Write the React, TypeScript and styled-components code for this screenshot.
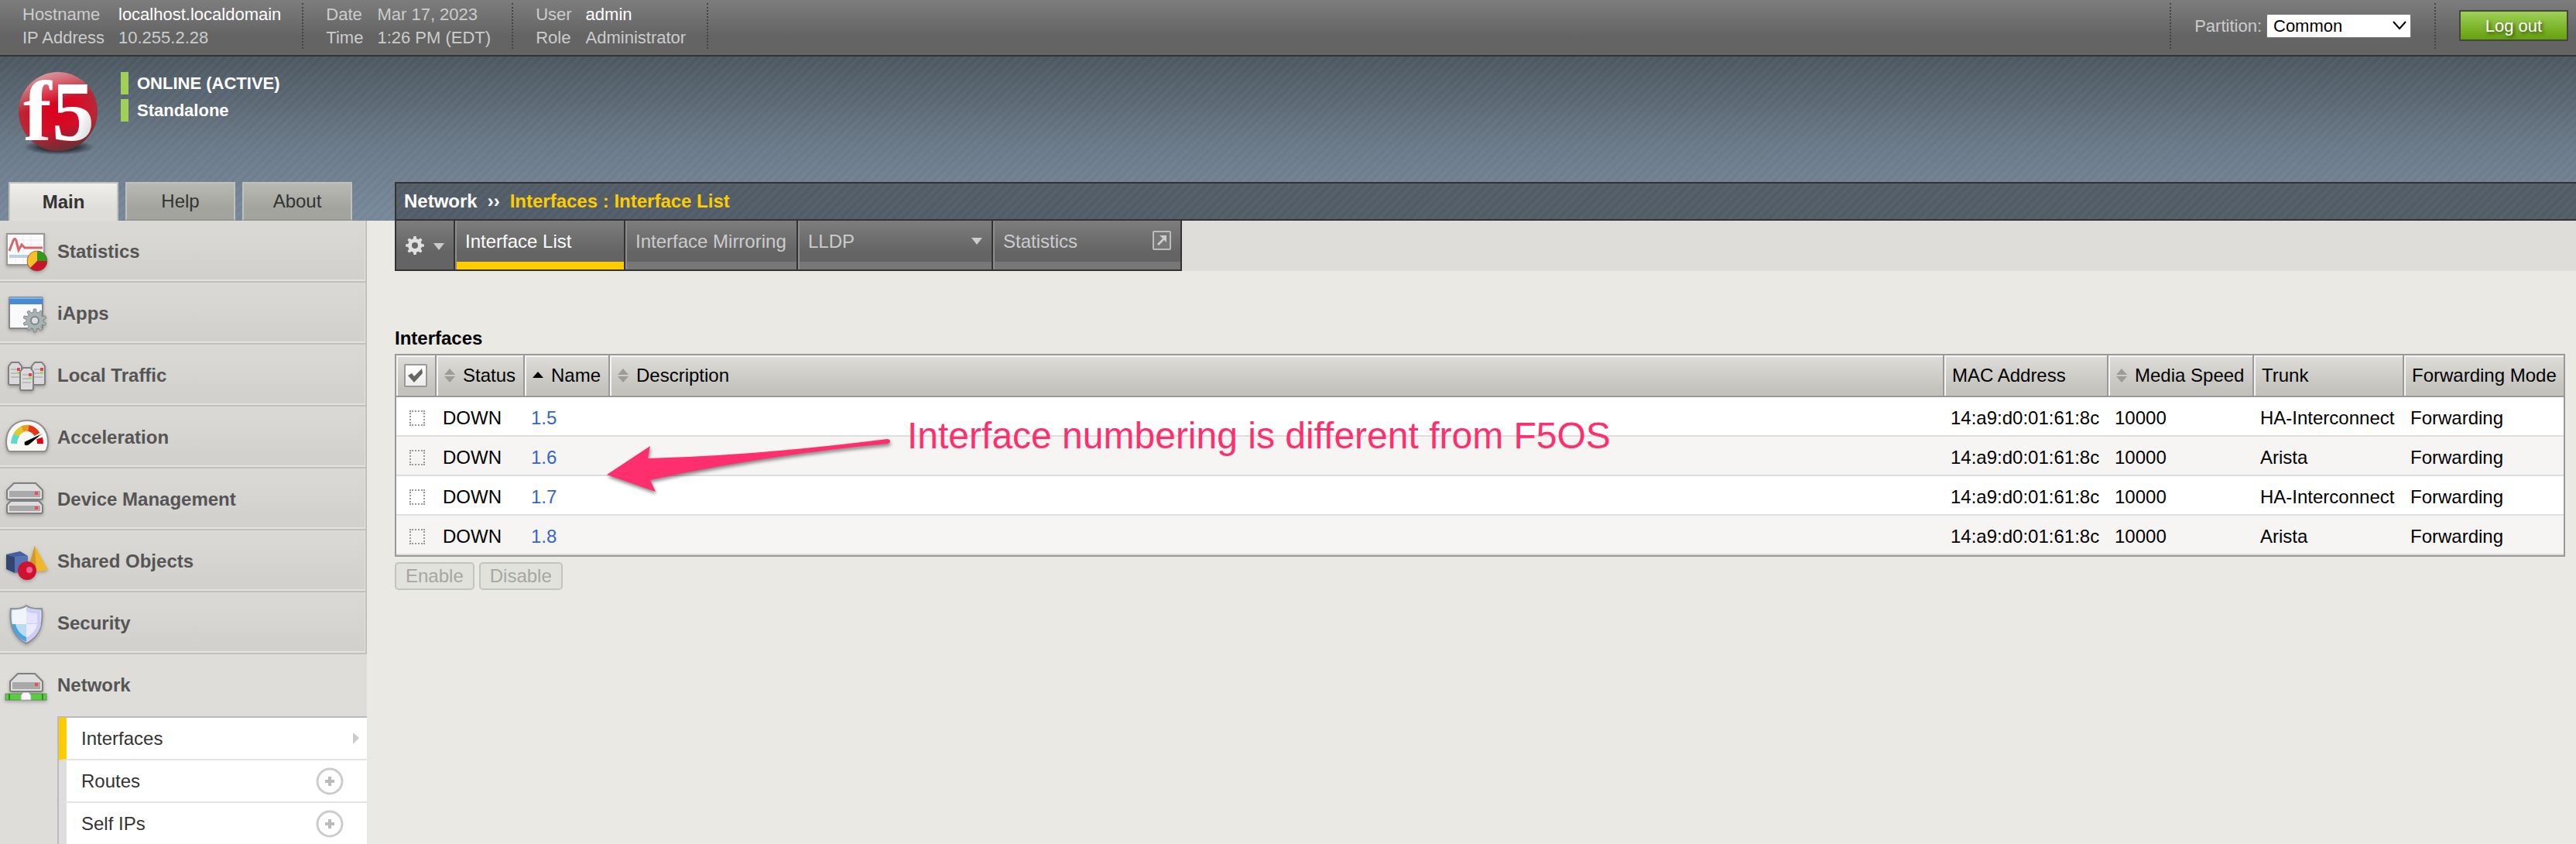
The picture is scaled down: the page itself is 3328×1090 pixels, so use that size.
import React from "react";
import styled, { createGlobalStyle, css } from "styled-components";

const GlobalStyle = createGlobalStyle`
  *, *::before, *::after { box-sizing: border-box; }
  body {
    margin: 0;
    background: #eae9e4;
    color: #000;
    font-family: "Liberation Sans", Arial, Helvetica, sans-serif;
    font-size: 24px;
    line-height: 30px;
  }
  a { color: inherit; text-decoration: none; }
  button, select, input { font: inherit; margin: 0; }
`;

const stripes =
  "repeating-linear-gradient(135deg, rgba(255,255,255,0.025) 0 4px, rgba(0,0,0,0.01) 4px 8px)";
const greyBar = "linear-gradient(#7d7d7d, #646464 65%)";

const Page = styled.div`
  display: flex;
  flex-direction: column;
  min-height: 100vh;
`;

/* ---- top bar ---- */

const TopBar = styled.header`
  display: flex;
  align-items: flex-start;
  height: 73px;
  padding: 4px 10px 0 0;
  background: ${greyBar};
  border-bottom: 2px solid #333;
  color: #ccc;
  font-size: 22px;
  line-height: 29px;
`;

const InfoBlock = styled.dl`
  display: grid;
  grid-template-columns: auto auto;
  column-gap: 18px;
  height: 59px;
  margin: 0;
  padding: 0 27px 0 29px;
  border-right: 2px dotted #444;
`;

const Term = styled.dt``;

const Value = styled.dd<{ $strong?: boolean }>`
  margin: 0;
  color: ${(p) => (p.$strong ? "#fff" : "inherit")};
`;

const Session = styled.div`
  display: flex;
  margin-left: auto;
`;

const PartitionBox = styled.div`
  display: flex;
  align-items: center;
  gap: 6px;
  height: 59px;
  padding: 0 30px;
  border: 2px dotted #444;
  border-width: 0 2px;
`;

const SelectWrap = styled.div`
  position: relative;
  display: flex;
`;

const PartitionSelect = styled.select`
  appearance: none;
  width: 187px;
  height: 31px;
  padding: 0 8px;
  background: #fff;
  border: 1px solid #777;
  border-radius: 2px;
  color: #000;
  line-height: 28px;
`;

const SelectChevron = styled.svg`
  position: absolute;
  right: 6px;
  top: 9px;
  pointer-events: none;
`;

const LogoutArea = styled.div`
  padding: 9px 0 0 30px;
`;

const LogoutButton = styled.button`
  display: block;
  width: 141px;
  height: 40px;
  padding: 0;
  background: linear-gradient(#9fd057, #64a00c);
  border: 2px solid #444;
  color: #fff;
  text-shadow: 2px 2px 4px rgba(0, 0, 0, 0.6);
`;

/* ---- banner ---- */

const Banner = styled.div`
  display: grid;
  grid-template-columns: 510px 1fr;
  align-items: end;
  height: 212px;
  background: ${stripes}, linear-gradient(#4d5861, #6b7a89 55%, #778899 95%);
`;

const BannerSide = styled.div`
  display: flex;
  flex-direction: column;
  justify-content: space-between;
  height: 212px;
  padding: 4px 0 0 11px;
`;

const Identity = styled.div`
  display: flex;
  gap: 28px;
  padding-left: 11px;
`;

const StatusList = styled.ul`
  display: flex;
  flex-direction: column;
  gap: 6px;
  margin: 16px 0 0;
  padding: 0;
  list-style: none;
`;

const StatusItem = styled.li`
  padding-left: 11px;
  border-left: 10px solid #a0d057;
  color: #fff;
  font-size: 22px;
  font-weight: bold;
  line-height: 29px;
`;

const Tabs = styled.nav`
  display: flex;
  gap: 9px;
`;

const Tab = styled.button<{ $active?: boolean }>`
  width: 142px;
  height: 50px;
  padding: 0;
  border: 2px solid #c0c0bf;
  color: #333;
  ${(p) =>
    p.$active
      ? css`
          background: linear-gradient(#f0efec, #deddd9 70%);
          border-bottom: 0;
          font-weight: bold;
        `
      : css`
          background: linear-gradient(#b9b9b4, #a4a49e 70%);
          border-bottom-color: #969692;
        `}
`;

const Breadcrumb = styled.h1`
  display: flex;
  align-items: center;
  gap: 13px;
  height: 50px;
  margin: 0;
  padding-left: 10px;
  background: ${stripes}, #525d68;
  border: 2px solid #333;
  border-right: 0;
  color: #fff;
  font-size: 24px;
  font-weight: bold;
`;

const Crumb = styled.span`
  color: #fc0;
`;

/* ---- sidebar ---- */

const Body = styled.div`
  display: grid;
  grid-template-columns: 474px 1fr;
  flex: 1;
`;

const Sidebar = styled.nav`
  background: #deddd9;
`;

const SideItem = styled.a<{ $open?: boolean }>`
  display: flex;
  align-items: center;
  height: 80px;
  padding-top: ${(p) => (p.$open ? 0 : 2)}px;
  color: #555;
  font-weight: bold;
  ${(p) =>
    !p.$open &&
    css`
      background: linear-gradient(#dad9d5, #d1d0cc);
      border-right: 2px solid #c0c0bf;
      border-bottom: 2px solid #c0c0bf;
      box-shadow: inset -1px -2px 0 #e3e2df;
    `}
`;

const SideIcon = styled.svg`
  flex: none;
  width: 74px;
  height: 76px;
  filter: drop-shadow(0 2px 2px rgba(0, 0, 0, 0.25));
`;

const SubMenu = styled.ul`
  margin: 0 0 0 74px;
  padding: 0;
  list-style: none;
  border: 2px solid #bbb;
  border-width: 2px 0 0 2px;
`;

const SubItem = styled.li<{ $active?: boolean }>`
  display: flex;
  align-items: center;
  justify-content: space-between;
  height: 55px;
  padding: 0 ${(p) => (p.$active ? 10 : 30)}px 0 19px;
  background: #fff;
  border-left: 10px solid ${(p) => (p.$active ? "#fc0" : "#ddd")};
  border-bottom: 2px solid #e4e4e4;
  color: #333;
  &:last-child {
    height: 53px;
    border-bottom: 0;
  }
`;

const AddButton = styled.button`
  display: flex;
  padding: 0;
  background: none;
  border: 0;
`;

/* ---- main ---- */

const Main = styled.main`
  min-width: 0;
  padding-left: 36px;
`;

const MenuStrip = styled.nav`
  display: flex;
  height: 65px;
  background: #deddd9;
`;

const menuCell = css`
  height: 65px;
  border-right: 2px solid #333;
  border-bottom: 2px solid #333;
  background: ${greyBar};
`;

const GearButton = styled.button`
  ${menuCell}
  display: flex;
  align-items: center;
  gap: 12px;
  width: 78px;
  padding: 0 0 0 12px;
  border-left: 2px solid #333;
  border-top: 0;
`;

const MenuLink = styled.a<{ $active?: boolean; $width: number }>`
  ${menuCell}
  display: flex;
  align-items: flex-start;
  justify-content: space-between;
  min-width: ${(p) => p.$width}px;
  padding: 12px 12px 0 13px;
  color: ${(p) => (p.$active ? "#fff" : "#ccc")};
  box-shadow: inset 2px 0 0 #8d8d8d, inset 0 -10px 0 ${(p) => (p.$active ? "#fc0" : "#777")};
`;

const Heading = styled.h2`
  margin: 72px 0 5px;
  font-size: 24px;
  line-height: 30px;
`;

const TableArea = styled.div`
  position: relative;
  margin-right: 14px;
`;

const Table = styled.table`
  width: 100%;
  table-layout: fixed;
  border: 2px solid #999;
  border-collapse: separate;
  border-spacing: 0;
`;

const Th = styled.th`
  height: 54px;
  padding: 0 0 0 10px;
  background: linear-gradient(#deddd9, #c3c2bd 85%);
  border-right: 2px solid #999;
  border-bottom: 2px solid #999;
  box-shadow: inset 2px 2px 0 #f4f4f2;
  font-weight: normal;
  text-align: left;
  white-space: nowrap;
  &:last-child { border-right: 0; }
`;

const HeadLabel = styled.span`
  display: flex;
  align-items: center;
  gap: 10px;
`;

const Row = styled.tr`
  background: #fff;
  &:nth-child(even) { background: #f6f5f3; }
`;

const Td = styled.td`
  height: 51px;
  padding: 4px 0 0 8px;
  border-bottom: 2px solid #ddd;
  white-space: nowrap;
`;

const InterfaceLink = styled.a`
  color: #36c;
`;

const CheckHolder = styled.span`
  position: relative;
  display: flex;
`;

const HeadCheck = styled.input`
  appearance: none;
  width: 30px;
  height: 30px;
  background: linear-gradient(#fff, #ececea);
  border: 2px solid #999;
  border-radius: 2px;
`;

const HeadTick = styled.svg`
  position: absolute;
  left: 5px;
  top: 5px;
  pointer-events: none;
`;

const RowCheck = styled.input`
  appearance: none;
  display: block;
  width: 20px;
  height: 20px;
  margin-left: 9px;
  border: 2px dotted #999;
`;

const Note = styled.div`
  position: absolute;
  left: 270px;
  top: 78px;
  display: flex;
  align-items: flex-start;
  gap: 20px;
  color: #ff2f6e;
  font-size: 48px;
  line-height: 56px;
  white-space: nowrap;
  pointer-events: none;
`;

const Arrow = styled.svg`
  display: block;
  filter: drop-shadow(1px 3px 2px rgba(0, 0, 0, 0.45));
`;

const Actions = styled.div`
  display: flex;
  gap: 6px;
  padding-top: 7px;
`;

const ActionButton = styled.button`
  height: 36px;
  padding: 0 12px;
  background: #e2e2dd;
  border: 2px solid #c4c4be;
  border-radius: 5px;
  color: #a6a6a3;
  line-height: 30px;
`;

/* ---- drawings ---- */

const gearPath = (r: number, inner: number, teeth: number) => {
  const pts: string[] = [];
  const step = (Math.PI * 2) / teeth;
  for (let i = 0; i < teeth; i++) {
    const a = i * step - Math.PI / 2;
    [[-0.3, inner], [-0.17, r], [0.17, r], [0.3, inner]].forEach(([k, d]) => {
      pts.push(`${(Math.cos(a + k * step) * d).toFixed(2)} ${(Math.sin(a + k * step) * d).toFixed(2)}`);
    });
  }
  return `M${pts.join("L")}Z`;
};

const Logo = () => (
  <svg width="106" height="138" viewBox="22 77 106 138" role="img" aria-label="f5">
    <defs>
      <radialGradient id="ball" cx="0.5" cy="0.5" r="0.55">
        <stop offset="0" stopColor="#d9001d" />
        <stop offset="0.6" stopColor="#d3122b" />
        <stop offset="1" stopColor="#a5343a" />
      </radialGradient>
      <linearGradient id="shine" x1="0.3" y1="0" x2="0.6" y2="1">
        <stop offset="0" stopColor="#fff" stopOpacity="0.55" />
        <stop offset="0.4" stopColor="#fff" stopOpacity="0" />
        <stop offset="0.7" stopColor="#333" stopOpacity="0" />
        <stop offset="1" stopColor="#333" stopOpacity="0.6" />
      </linearGradient>
      <linearGradient id="letter" x1="0" y1="0" x2="1" y2="1">
        <stop offset="0.6" stopColor="#fff" />
        <stop offset="1" stopColor="#bbb" />
      </linearGradient>
      <radialGradient id="floor">
        <stop offset="0.5" stopColor="#1c2228" stopOpacity="0.8" />
        <stop offset="1" stopColor="#1c2228" stopOpacity="0" />
      </radialGradient>
    </defs>
    <ellipse cx="76" cy="190" rx="46" ry="10" fill="url(#floor)" />
    <circle cx="75" cy="144" r="51" fill="url(#ball)" />
    <circle cx="75" cy="144" r="51" fill="url(#shine)" />
    <g fill="url(#letter)" fontFamily="Liberation Serif, Times New Roman, serif" fontWeight="bold" fontSize="110">
      <text x="30" y="181">f</text>
      <text x="67" y="181">5</text>
    </g>
  </svg>
);

const Server = ({ x, y, w, h }: { x: number; y: number; w: number; h: number }) => (
  <g>
    <path
      d={`M${x} ${y + 6}l4 -5h${w - 8}l4 5v${h - 8}q0 2 -2 2h${4 - w}q-2 0 -2 -2z`}
      fill="#dadada"
      stroke="#808080"
      strokeWidth="2"
    />
    <path d={`M${x + 3} ${y + 10}h${w - 8}M${x + 3} ${y + 15}h${w - 8}M${x + 3} ${y + 20}h${w - 6}`} stroke="#bbb" strokeWidth="2" />
    <rect x={x + w - 6} y={y + 8} width="4" height="4" fill="#f33b4a" />
    <rect x={x + w - 6} y={y + 13} width="4" height="3" fill="#8fe070" />
  </g>
);

const Rack = ({ x, y, w, h, slope }: { x: number; y: number; w: number; h: number; slope: number }) => (
  <g>
    <path
      d={`M${x} ${y + slope}l${slope} ${-slope}h${w - 2 * slope}l${slope} ${slope}v${h - slope - 2}q0 2 -2 2h${4 - w}q-2 0 -2 -2z`}
      fill="#dedede"
      stroke="#808080"
      strokeWidth="2"
    />
    <rect x={x + 3} y={y + slope + 1} width={w - 6} height={h - slope - 4} fill="#a9a9a9" />
    <rect x={x + w - 10} y={y + slope + 2} width="4" height="4" fill="#ff4352" />
  </g>
);

const icons: Record<string, React.ReactNode> = {
  Statistics: (
    <>
      <rect x="9" y="17" width="48" height="40" fill="#fbfbfb" stroke="#999" strokeWidth="2" />
      <path d="M12 25h43M12 31h43M20 19v36M30 19v36M40 19v36" stroke="#e8ecf0" />
      <path d="M12 46h30" stroke="#b9d0ea" strokeWidth="4" />
      <path d="M12 39L17 26q2 -5 4 0L24 38L28 31L32 35H55" fill="none" stroke="#d6656a" strokeWidth="3" />
      <circle cx="48" cy="52" r="13" fill="#c8152c" />
      <path d="M48 52V39a13 13 0 0 1 13 13z" fill="#2f9a1c" />
      <path d="M48 52V39a13 13 0 0 0 -9 22z" fill="#f6bf2b" />
      <circle cx="48" cy="52" r="13" fill="none" stroke="#7a5a20" strokeOpacity="0.5" />
    </>
  ),
  iApps: (
    <>
      <rect x="12" y="19" width="43" height="40" rx="1" fill="#fafafc" stroke="#888" strokeWidth="2" />
      <rect x="12" y="19" width="43" height="9" fill="#4a8bd0" />
      <path d="M12 20h43" stroke="#7db4ea" strokeWidth="2" />
      <g transform="translate(45 49)">
        <path d={gearPath(15, 11, 10)} fill="#a9b3b3" stroke="#7e8888" />
        <circle r="5" fill="#dcdfdf" stroke="#7e8888" strokeWidth="2" />
      </g>
    </>
  ),
  "Local Traffic": (
    <>
      <Server x={11} y={22} w={17} h={30} />
      <Server x={41} y={22} w={17} h={30} />
      <Server x={26} y={29} w={17} h={30} />
    </>
  ),
  Acceleration: (
    <>
      <path d="M8 46C8 28 20 18 35 18S62 28 62 46Q62 52 60 56Q59 58 57 58H13Q11 58 10 56Q8 52 8 46Z" fill="#f8f8f6" stroke="#8f8f8f" strokeWidth="2" />
      <g fill="none" strokeWidth="8">
        <path d="M18 48A17 20 0 0 1 22 36" stroke="#62d8cc" />
        <path d="M21 37A17 20 0 0 1 30 29" stroke="#dccb2e" />
        <path d="M29 29A17 20 0 0 1 38 28" stroke="#ec9a1c" />
        <path d="M37 28A17 20 0 0 1 48 36" stroke="#e2351a" />
        <path d="M51 41Q52 44 52 48" stroke="#e60012" />
      </g>
      <path d="M32 45L56 34L37 50Q33 52 31 49Q31 46 32 45Z" fill="#000" stroke="#f8f8f6" strokeWidth="1" />
    </>
  ),
  "Device Management": (
    <>
      <Rack x={9} y={42} w={46} h={16} slope={5} />
      <Rack x={9} y={19} w={46} h={21} slope={9} />
    </>
  ),
  "Shared Objects": (
    <>
      <path d="M8 31L19 34V55L8 50Z" fill="#34456f" />
      <path d="M19 34L36 33V53L19 55Z" fill="#5474b8" />
      <path d="M8 31L26 27L36 33L19 34Z" fill="#4560a0" />
      <path d="M45 20L62 51Q50 55 36 50Z" fill="#f0b62e" />
      <path d="M45 20L47 53Q40 53 36 50Z" fill="#d19a26" />
      <circle cx="35" cy="52" r="12" fill="#cf1230" />
      <circle cx="38" cy="51" r="4" fill="#ee5f92" />
    </>
  ),
  Security: (
    <>
      <path d="M34 17Q40 22 54 21Q58 54 34 66Q10 54 14 21Q28 22 34 17Z" fill="#cfe4f4" stroke="#8d8f99" strokeWidth="2" />
      <path d="M34 19Q40 24 52 23V41H34Z" fill="#cfcdf8" />
      <path d="M34 19Q28 24 16 23V41H34Z" fill="#f0f4fb" />
      <path d="M15 41Q18 57 34 64V41Z" fill="#4da3dc" />
      <path d="M53 41Q50 57 34 64V41Z" fill="#cfcdf8" />
      <path d="M34 24Q39 28 48 27V40H34Z" fill="#e6e4fd" />
      <path d="M20 41Q22 52 34 58V41Z" fill="#b8dcf2" />
      <path d="M48 41Q46 52 34 58V41Z" fill="#ecebfe" />
    </>
  ),
  Network: (
    <>
      <rect x="7" y="51" width="53" height="8" fill="#57cf3c" stroke="#6d8a66" strokeWidth="1" />
      <path d="M12 51v8M55 51v8" stroke="#2e8d1c" strokeWidth="2" />
      <path d="M27 59V53L30 49H37L40 53V59Z" fill="#fafafa" stroke="#aaa" />
      <Rack x={13} y={25} w={42} h={23} slope={10} />
    </>
  ),
};

const SortBoth = () => (
  <svg width="14" height="18" viewBox="0 0 14 18" aria-hidden="true">
    <path d="M0 8L7 0L14 8ZM0 10H14L7 18Z" fill="#9c9c99" />
  </svg>
);

const SortUp = () => (
  <svg width="14" height="18" viewBox="0 0 14 18" aria-hidden="true">
    <path d="M0 12L7 4L14 12Z" fill="#000" />
  </svg>
);

const DownTriangle = ({ top = 0 }: { top?: number }) => (
  <svg width="14" height={10 + top} viewBox={`0 ${-top} 14 ${10 + top}`} aria-hidden="true">
    <path d="M0 0H14L7 9Z" fill="#ccc" />
  </svg>
);

const Popout = () => (
  <svg width="24" height="26" viewBox="0 0 24 26" aria-hidden="true">
    <rect x="1" y="2" width="22" height="23" rx="1" fill="#777" stroke="#bdbdbd" strokeWidth="2" />
    <path d="M9 7H18V16L15 13L8 20L6 18L13 11Z" fill="#ccc" />
  </svg>
);

/* ---- data ---- */

const sections = [
  "Statistics",
  "iApps",
  "Local Traffic",
  "Acceleration",
  "Device Management",
  "Shared Objects",
  "Security",
  "Network",
];

const columns: { label: string; width?: number; icon?: React.ReactNode }[] = [
  { label: "Status", width: 114, icon: <SortBoth /> },
  { label: "Name", width: 110, icon: <SortUp /> },
  { label: "Description", icon: <SortBoth /> },
  { label: "MAC Address", width: 212 },
  { label: "Media Speed", width: 188, icon: <SortBoth /> },
  { label: "Trunk", width: 194 },
  { label: "Forwarding Mode", width: 206 },
];

const rows = [
  { name: "1.5", trunk: "HA-Interconnect" },
  { name: "1.6", trunk: "Arista" },
  { name: "1.7", trunk: "HA-Interconnect" },
  { name: "1.8", trunk: "Arista" },
];

export default function App() {
  return (
    <Page>
      <GlobalStyle />
      <TopBar>
        <InfoBlock>
          <Term>Hostname</Term>
          <Value $strong>localhost.localdomain</Value>
          <Term>IP Address</Term>
          <Value>10.255.2.28</Value>
        </InfoBlock>
        <InfoBlock>
          <Term>Date</Term>
          <Value>Mar 17, 2023</Value>
          <Term>Time</Term>
          <Value>1:26 PM (EDT)</Value>
        </InfoBlock>
        <InfoBlock>
          <Term>User</Term>
          <Value $strong>admin</Value>
          <Term>Role</Term>
          <Value>Administrator</Value>
        </InfoBlock>
        <Session>
          <PartitionBox>
            <label htmlFor="partition">Partition:</label>
            <SelectWrap>
              <PartitionSelect id="partition" defaultValue="Common">
                <option>Common</option>
              </PartitionSelect>
              <SelectChevron width="18" height="12" viewBox="0 0 18 12" aria-hidden="true">
                <path d="M1 1L9 10L17 1" fill="none" stroke="#000" strokeWidth="2" />
              </SelectChevron>
            </SelectWrap>
          </PartitionBox>
          <LogoutArea>
            <LogoutButton type="button">Log out</LogoutButton>
          </LogoutArea>
        </Session>
      </TopBar>

      <Banner>
        <BannerSide>
          <Identity>
            <Logo />
            <StatusList>
              <StatusItem>ONLINE (ACTIVE)</StatusItem>
              <StatusItem>Standalone</StatusItem>
            </StatusList>
          </Identity>
          <Tabs>
            <Tab type="button" $active>Main</Tab>
            <Tab type="button">Help</Tab>
            <Tab type="button">About</Tab>
          </Tabs>
        </BannerSide>
        <Breadcrumb>
          <span>Network</span>
          <span>››</span>
          <Crumb>Interfaces : Interface List</Crumb>
        </Breadcrumb>
      </Banner>

      <Body>
        <Sidebar>
          {sections.map((name) => (
            <SideItem key={name} href="#" $open={name === "Network"}>
              <SideIcon viewBox="0 2 74 76" aria-hidden="true">{icons[name]}</SideIcon>
              {name}
            </SideItem>
          ))}
          <SubMenu>
            <SubItem $active>
              <a href="#">Interfaces</a>
              <svg width="8" height="15" viewBox="0 0 8 15" aria-hidden="true">
                <path d="M0 0L8 7L0 15Z" fill="#ccc" />
              </svg>
            </SubItem>
            {["Routes", "Self IPs"].map((name) => (
              <SubItem key={name}>
                <a href="#">{name}</a>
                <AddButton type="button" aria-label={`Add ${name}`}>
                  <svg width="36" height="36" viewBox="0 0 36 36" aria-hidden="true">
                    <circle cx="18" cy="18" r="16" fill="none" stroke="#ccc" strokeWidth="3" />
                    <path d="M18 12V24M12 18H24" stroke="#bbb" strokeWidth="4" />
                  </svg>
                </AddButton>
              </SubItem>
            ))}
          </SubMenu>
        </Sidebar>

        <Main>
          <MenuStrip>
            <GearButton type="button" aria-label="Options">
              <svg width="24" height="28" viewBox="-12 -14 24 28" aria-hidden="true">
                <path d={gearPath(12, 9, 8)} fill="#e0e0e0" />
                <circle r="4" fill="#666" />
              </svg>
              <DownTriangle top={4} />
            </GearButton>
            <MenuLink href="#" $width={220} $active>Interface List</MenuLink>
            <MenuLink href="#" $width={223}>Interface Mirroring</MenuLink>
            <MenuLink href="#" $width={252}>
              LLDP
              <DownTriangle top={10} />
            </MenuLink>
            <MenuLink href="#" $width={244}>
              Statistics
              <Popout />
            </MenuLink>
          </MenuStrip>

          <Heading>Interfaces</Heading>
          <TableArea>
            <Table>
              <colgroup>
                <col width={52} />
                {columns.map((c) => (
                  <col key={c.label} width={c.width} />
                ))}
              </colgroup>
              <thead>
                <tr>
                  <Th>
                    <CheckHolder>
                      <HeadCheck type="checkbox" defaultChecked aria-label="Select all" />
                      <HeadTick width="20" height="20" viewBox="0 0 20 20" aria-hidden="true">
                        <path d="M0 10L5 7L8 11L18 1L19 7L8 19Z" fill="#666" />
                      </HeadTick>
                    </CheckHolder>
                  </Th>
                  {columns.map((c) => (
                    <Th key={c.label} scope="col">
                      <HeadLabel>
                        {c.icon}
                        {c.label}
                      </HeadLabel>
                    </Th>
                  ))}
                </tr>
              </thead>
              <tbody>
                {rows.map((r) => (
                  <Row key={r.name}>
                    <Td>
                      <RowCheck type="checkbox" aria-label={`Select ${r.name}`} />
                    </Td>
                    <Td>DOWN</Td>
                    <Td>
                      <InterfaceLink href="#">{r.name}</InterfaceLink>
                    </Td>
                    <Td />
                    <Td>14:a9:d0:01:61:8c</Td>
                    <Td>10000</Td>
                    <Td>{r.trunk}</Td>
                    <Td>Forwarding</Td>
                  </Row>
                ))}
              </tbody>
            </Table>
            <Note>
              <Arrow width="372" height="104" viewBox="0 -14 372 104" aria-hidden="true">
                <path
                  d="M4 64L60 27L57 43Q200 39 366 18Q370 18 370 21Q370 23 367 24Q200 40 60 71L67 86Z"
                  fill="#ff2f6e"
                />
              </Arrow>
              <span>Interface numbering is different from F5OS</span>
            </Note>
          </TableArea>
          <Actions>
            <ActionButton type="button" disabled>Enable</ActionButton>
            <ActionButton type="button" disabled>Disable</ActionButton>
          </Actions>
        </Main>
      </Body>
    </Page>
  );
}
